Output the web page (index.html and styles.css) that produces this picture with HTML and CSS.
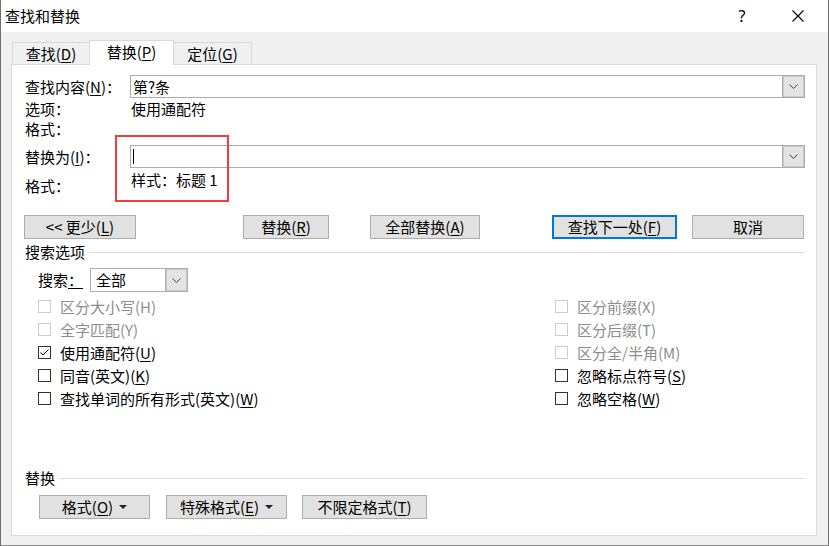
FILE: index.html
```html
<!DOCTYPE html>
<html lang="zh-CN">
<head>
<meta charset="utf-8">
<title>查找和替换</title>
<link rel="stylesheet" href="styles.css">
</head>
<body>
<div class="window">
  <div class="titlebar">
    <span class="title">查找和替换</span>
    <span class="help">?</span>
    <span class="close"><svg width="12" height="12" viewBox="0 0 12 12"><path d="M0.5 0.5 L11.5 11.5 M11.5 0.5 L0.5 11.5" stroke="#000" stroke-width="1.1" fill="none"/></svg></span>
  </div>
  <div class="body">
    <div class="tabs">
      <div class="tab t1">查找(<u>D</u>)</div>
      <div class="tab t2 active">替换(<u>P</u>)</div>
      <div class="tab t3">定位(<u>G</u>)</div>
    </div>
    <div class="panel">
      <div class="mark"></div>
      <div class="row r1">
        <div class="lbl">查找内容(<u>N</u>)：</div>
        <div class="combo"><span class="ctext">第?条</span><span class="dd"><svg width="9" height="5" viewBox="0 0 9 5"><path d="M0.5 0.5 L4.5 4.5 L8.5 0.5" stroke="#444" stroke-width="1" fill="none"/></svg></span></div>
      </div>
      <div class="row r2">
        <div class="lbl">选项：</div>
        <div class="val">使用通配符</div>
      </div>
      <div class="row r3">
        <div class="lbl">格式：</div>
      </div>
      <div class="row r4">
        <div class="lbl">替换为(<u>I</u>)：</div>
        <div class="combo"><span class="caret"></span><span class="dd"><svg width="9" height="5" viewBox="0 0 9 5"><path d="M0.5 0.5 L4.5 4.5 L8.5 0.5" stroke="#444" stroke-width="1" fill="none"/></svg></span></div>
      </div>
      <div class="row r5">
        <div class="lbl fmt2">格式：</div>
        <div class="val style">样式：标题 1</div>
      </div>
      <div class="btnrow">
        <div class="btn b1">&lt;&lt; 更少(<u>L</u>)</div>
        <div class="btn b2">替换(<u>R</u>)</div>
        <div class="btn b3">全部替换(<u>A</u>)</div>
        <div class="btn b4 default">查找下一处(<u>F</u>)</div>
        <div class="btn b5">取消</div>
      </div>
      <div class="sep s1"><span>搜索选项</span><i></i></div>
      <div class="search">
        <span class="slbl">搜索<u>：</u></span>
        <div class="select"><span class="stext">全部</span><span class="dd"><svg width="9" height="5" viewBox="0 0 9 5"><path d="M0.5 0.5 L4.5 4.5 L8.5 0.5" stroke="#444" stroke-width="1" fill="none"/></svg></span></div>
      </div>
      <div class="checks">
        <div class="ck off"><span class="cb"></span>区分大小写(H)</div>
        <div class="ck off"><span class="cb"></span>区分前缀(X)</div>
        <div class="ck off"><span class="cb"></span>全字匹配(Y)</div>
        <div class="ck off"><span class="cb"></span>区分后缀(T)</div>
        <div class="ck"><span class="cb"><svg width="11" height="11" viewBox="0 0 11 11"><path d="M1.5 5.5 L4 8 L9.5 2.5" stroke="#000" stroke-width="1" fill="none"/></svg></span>使用通配符(<u>U</u>)</div>
        <div class="ck off"><span class="cb"></span>区分全/半角(M)</div>
        <div class="ck"><span class="cb"></span>同音(英文)(<u>K</u>)</div>
        <div class="ck"><span class="cb"></span>忽略标点符号(<u>S</u>)</div>
        <div class="ck"><span class="cb"></span>查找单词的所有形式(英文)(<u>W</u>)</div>
        <div class="ck"><span class="cb"></span>忽略空格(<u>W</u>)</div>
      </div>
      <div class="sep s2"><span>替换</span><i></i></div>
      <div class="btnrow2">
        <div class="btn c1">格式(<u>O</u>) <svg class="tri" width="8" height="4" viewBox="0 0 8 4"><path d="M0 0 L8 0 L4 4 Z" fill="#222"/></svg></div>
        <div class="btn c2">特殊格式(<u>E</u>) <svg class="tri" width="8" height="4" viewBox="0 0 8 4"><path d="M0 0 L8 0 L4 4 Z" fill="#222"/></svg></div>
        <div class="btn c3">不限定格式(<u>T</u>)</div>
      </div>
    </div>
  </div>
</div>
</body>
</html>
```

FILE: styles.css
```css
* { box-sizing: border-box; }
html, body { margin: 0; padding: 0; }
body {
  width: 829px;
  height: 546px;
  overflow: hidden;
  font-family: "Noto Sans CJK SC", "Noto Sans", sans-serif;
  font-size: 15px;
  line-height: 20px;
  color: #000;
  background: #fff;
}
u { text-underline-offset: 2px; }

.window {
  width: 829px;
  height: 546px;
  border-left: 1px solid #6e6e6e;
  border-right: 1px solid #6e6e6e;
  border-bottom: 1px solid #8a8a8a;
  display: flex;
  flex-direction: column;
  background: #f0f0f0;
}

.titlebar {
  height: 32px;
  flex: none;
  background: #fff;
  display: flex;
  align-items: center;
}
.title { margin-left: 4px; }
.help { margin-left: auto; margin-right: 0; width: 14px; text-align: center; font-family: "Noto Sans", sans-serif; font-size: 16px; }
.close { margin-left: 43px; margin-right: 24px; display: flex; }

.body { flex: 1; display: flex; flex-direction: column; }

.tabs {
  margin-top: 8px;
  height: 24px;
  padding-left: 11px;
  display: flex;
  align-items: flex-end;
}
.tab {
  height: 22px;
  border: 1px solid #d9d9d9;
  border-bottom: none;
  background: #f0f0f0;
  display: flex;
  align-items: center;
  justify-content: center;
}
.t1 { width: 78px; }
.t2 { width: 85px; margin-left: -1px; }
.t3 { width: 79px; margin-left: -1px; }
.tab.active {
  height: 25px;
  margin-bottom: -1px;
  background: #fff;
  position: relative;
  z-index: 2;
  padding-bottom: 2px;
}

.panel {
  margin-left: 10px;
  width: 806px;
  height: 472px;
  background: #fff;
  border: 1px solid #d9d9d9;
  padding: 10px 11px 0 13px;
  position: relative;
  display: flex;
  flex-direction: column;
}
.mark {
  position: absolute;
  left: 103px;
  top: 70px;
  width: 114px;
  height: 67px;
  border: 2px solid #f23b3b;
}

.row { display: flex; align-items: center; }
.lbl { width: 105px; flex: none; white-space: nowrap; }
.r1 { height: 23px; }
.r2 { height: 21px; }
.r3 { height: 20px; }
.r4 { height: 23px; margin-top: 6px; }
.r5 { height: 24px; align-items: flex-start; }
.fmt2 { margin-top: 8px; }
.val { margin-left: 1px; }
.style { margin-top: 2px; }

.combo {
  width: 675px;
  height: 23px;
  border: 1px solid #acacac;
  display: flex;
  align-items: center;
}
.ctext { margin-left: 2px; }
.caret { width: 1px; height: 15px; background: #000; margin-left: 2px; }
.dd {
  margin-left: auto;
  width: 22px;
  height: 100%;
  background: #e3e3e3;
  border-left: 1px solid #acacac;
  box-shadow: inset 0 0 0 1px #c9c9c9;
  display: flex;
  align-items: center;
  justify-content: center;
}

.btn {
  height: 24px;
  background: #e1e1e1;
  border: 1px solid #adadad;
  display: flex;
  align-items: center;
  justify-content: center;
  white-space: nowrap;
  flex: none;
}
.btn.default { border: 2px solid #0078d7; }
.btnrow { display: flex; margin-top: 23px; margin-left: -1px; height: 24px; }
.b1 { width: 112px; }
.b2 { width: 86px; margin-left: 107px; }
.b3 { width: 110px; margin-left: 41px; }
.b4 { width: 125px; margin-left: 72px; }
.b5 { width: 112px; margin-left: 15px; }

.sep { display: flex; align-items: center; height: 20px; }
.sep i { flex: 1; height: 1px; background: #dcdcdc; margin-left: 4px; }
.s1 { margin-top: 3px; }
.s2 { margin-top: 58px; }

.search { display: flex; align-items: center; margin-top: 6px; margin-left: 13px; height: 24px; }
.slbl { width: 52px; flex: none; }
.select {
  width: 98px;
  height: 24px;
  border: 1px solid #acacac;
  display: flex;
  align-items: center;
}
.stext { margin-left: 5px; }

.checks {
  margin-top: 3px;
  margin-left: 13px;
  display: grid;
  grid-template-columns: 517px 1fr;
  grid-auto-rows: 23px;
}
.ck { display: flex; align-items: center; white-space: nowrap; }
.cb {
  width: 13px;
  height: 13px;
  border: 1px solid #333;
  margin-right: 9px;
  display: flex;
  align-items: center;
  justify-content: center;
  flex: none;
}
.ck.off { color: #8d8d8d; }
.ck.off .cb { border-color: #cccccc; }

.btnrow2 { display: flex; margin-top: 7px; margin-left: 14px; }
.c1 { width: 111px; }
.c2 { width: 121px; margin-left: 16px; }
.c3 { width: 125px; margin-left: 15px; }
.tri { margin-left: 6px; }
```
